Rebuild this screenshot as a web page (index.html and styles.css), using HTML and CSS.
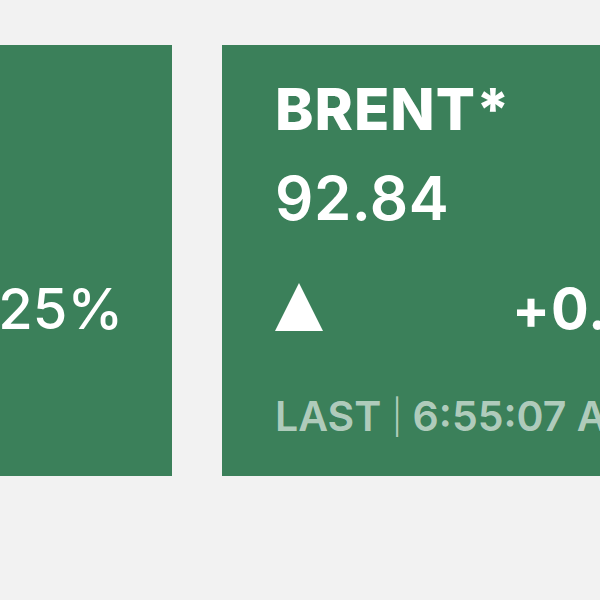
FILE: index.html
```html
<!DOCTYPE html>
<html>
<head>
<meta charset="utf-8">
<link rel="stylesheet" href="styles.css">
</head>
<body>
<div class="viewport">
  <div class="ticker">
    <div class="card">
      <div class="name">WTI*</div>
      <div class="price">88.24</div>
      <div class="change-row">
        <span class="arrow"></span>
        <span class="change"><b>+0.22</b> 0.25%</span>
      </div>
      <div class="updated">LAST <span class="sep">|</span> 6:55:07 AM EST</div>
    </div>
    <div class="card">
      <div class="name">BRENT*</div>
      <div class="price">92.84</div>
      <div class="change-row">
        <span class="arrow"></span>
        <span class="change"><b>+0.22</b> 0.24%</span>
      </div>
      <div class="updated">LAST <span class="sep">|</span> 6:55:07 AM EST</div>
    </div>
  </div>
</div>
</body>
</html>
```
FILE: styles.css
```css
html, body {
  margin: 0;
  padding: 0;
  background: #f2f2f2;
}
.viewport {
  width: 600px;
  height: 600px;
  overflow: hidden;
}
.ticker {
  display: flex;
  gap: 50px;
  margin-left: -528px;
  padding-top: 45px;
  font-family: Inter, "Liberation Sans", sans-serif;
  color: #fff;
}
.card {
  flex: 0 0 700px;
  box-sizing: border-box;
  background: #3b805a;
  padding: 35px 49px 39px 53px;
  display: flex;
  flex-direction: column;
}
.name {
  font-size: 58px;
  line-height: 58px;
  font-weight: 800;
  letter-spacing: 1px;
  white-space: nowrap;
}
.price {
  margin-top: 30px;
  font-size: 60px;
  line-height: 60px;
  font-weight: 600;
  letter-spacing: 0.5px;
}
.change-row {
  margin-top: 55px;
  display: flex;
  justify-content: space-between;
  align-items: flex-start;
  height: 48px;
}
.arrow {
  width: 0;
  height: 0;
  border-left: 24px solid transparent;
  border-right: 24px solid transparent;
  border-bottom: 48px solid #fff;
}
.change {
  font-size: 56px;
  line-height: 55px;
  font-weight: 500;
  margin-top: -1px;
  white-space: nowrap;
}
.change b {
  font-weight: 700;
  letter-spacing: 1px;
}
.updated {
  margin-top: 65px;
  height: 41px;
  font-size: 41px;
  line-height: 41px;
  font-weight: 600;
  color: rgba(255, 255, 255, 0.62);
  white-space: nowrap;
}
.sep {
  font-weight: 300;
  font-size: 34px;
  line-height: 0;
  vertical-align: 2px;
}
```
